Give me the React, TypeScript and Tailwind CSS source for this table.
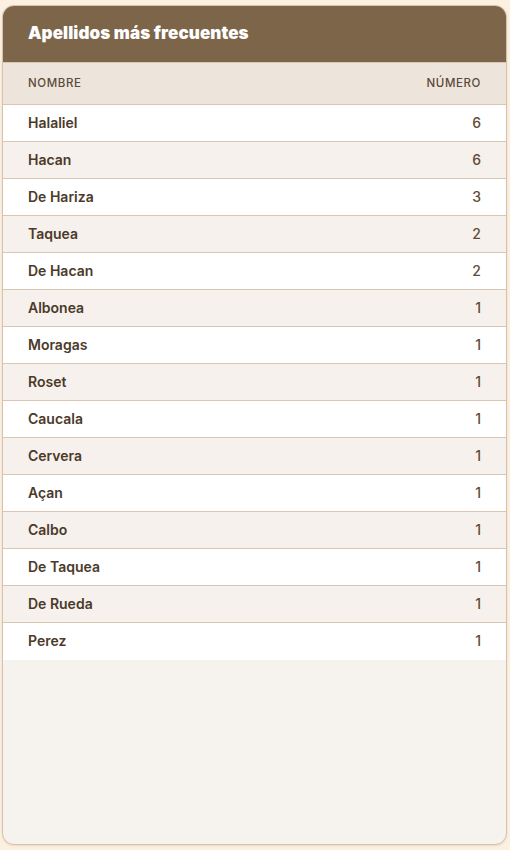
const rows: [string, number][] = [
  ['Halaliel', 6],
  ['Hacan', 6],
  ['De Hariza', 3],
  ['Taquea', 2],
  ['De Hacan', 2],
  ['Albonea', 1],
  ['Moragas', 1],
  ['Roset', 1],
  ['Caucala', 1],
  ['Cervera', 1],
  ['Açan', 1],
  ['Calbo', 1],
  ['De Taquea', 1],
  ['De Rueda', 1],
  ['Perez', 1],
];

export default function App() {
  return (
    <div className="h-[850px] w-[510px] bg-[#fcf0e0] px-[2px] pt-[5px] pb-[5px] font-['Inter',sans-serif]">
      <div className="flex h-full w-[505px] flex-col overflow-hidden rounded-[12px] border border-[#d6c2ad] bg-[#f6f3ee] shadow-[0_1px_2px_rgba(120,90,60,0.15)]">
        <div className="flex h-[56px] items-center bg-[#7d6549] px-[25px]">
          <h2 className="text-[17px] font-black tracking-[0.1px] text-white">Apellidos más frecuentes</h2>
        </div>
        <table className="w-full border-collapse">
          <thead>
            <tr className="h-[42px] border-y border-[#d9c6b3] bg-[#ede5dc]">
              <th className="px-[25px] text-left text-[11.5px] font-medium tracking-[0.6px] text-[#5c4a38] uppercase">Nombre</th>
              <th className="px-[25px] text-right text-[11.5px] font-medium tracking-[0.6px] text-[#5c4a38] uppercase">Número</th>
            </tr>
          </thead>
          <tbody>
            {rows.map(([name, n], i) => (
              <tr
                key={name}
                className={
                  'h-[37px] border-b border-[#d9c6b3] last:border-b-0 ' +
                  (i % 2 === 0 ? 'bg-white' : 'bg-[#f6f1ec]')
                }
              >
                <td className="px-[25px] pb-px text-left text-[14px] font-semibold text-[#4b3a2a]">{name}</td>
                <td className="px-[25px] pb-px text-right text-[14px] font-medium text-[#5f4c38]">{n}</td>
              </tr>
            ))}
          </tbody>
        </table>
      </div>
    </div>
  );
}
